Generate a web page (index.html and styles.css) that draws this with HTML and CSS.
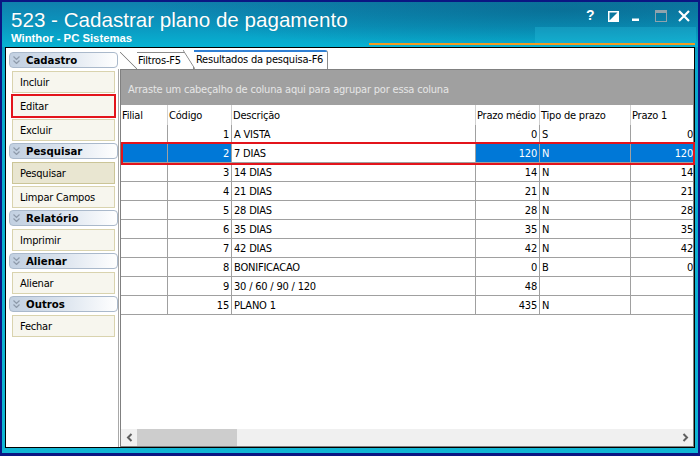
FILE: index.html
```html
<!DOCTYPE html>
<html>
<head>
  <title>523 - Cadastrar plano de pagamento</title>
  <link rel="stylesheet" href="styles.css">
</head>
<body>
  <div class="window">
    <div class="titlebar">
      <div class="title-text">
        <div class="title">523 - Cadastrar plano de pagamento</div>
        <div class="subtitle">Winthor - PC Sistemas</div>
      </div>
      <div class="controls">
        <span class="ctl-help">?</span>
        <svg class="ctl-contrast" width="11" height="11" viewBox="0 0 11 11">
          <rect x="0.75" y="0.75" width="9.5" height="9.5" fill="none" stroke="#fff" stroke-width="1.5"/>
          <polygon points="10,1 10,10 1,10" fill="#fff"/>
        </svg>
        <svg class="ctl-min" width="7" height="11" viewBox="0 0 7 11">
          <rect x="0" y="8.5" width="7" height="2.5" fill="#fff"/>
        </svg>
        <svg class="ctl-max" width="12" height="12" viewBox="0 0 12 12">
          <rect x="0.5" y="0.5" width="11" height="11" fill="none" stroke="#8fa3ad" stroke-width="1"/>
          <rect x="0.5" y="0.5" width="11" height="2.5" fill="#8fa3ad"/>
        </svg>
        <svg class="ctl-close" width="12" height="12" viewBox="0 0 12 12">
          <path d="M1 1 L11 11 M11 1 L1 11" stroke="#fff" stroke-width="2.2" fill="none"/>
        </svg>
      </div>
    </div>

    <div class="content">
      <!-- Menu lateral -->
      <div class="sidebar">
        <div class="group-header"><svg width="7" height="8" viewBox="0 0 7 8"><path d="M0.5 0.5 L3.5 3.5 L6.5 0.5 M0.5 4.5 L3.5 7.5 L6.5 4.5" fill="none" stroke="#8e9aaa" stroke-width="1.2"/></svg>Cadastro</div>
        <div class="side-btn">Incluir</div>
        <div class="side-btn marked">Editar</div>
        <div class="side-btn">Excluir</div>

        <div class="group-header"><svg width="7" height="8" viewBox="0 0 7 8"><path d="M0.5 0.5 L3.5 3.5 L6.5 0.5 M0.5 4.5 L3.5 7.5 L6.5 4.5" fill="none" stroke="#8e9aaa" stroke-width="1.2"/></svg>Pesquisar</div>
        <div class="side-btn active">Pesquisar</div>
        <div class="side-btn">Limpar Campos</div>

        <div class="group-header"><svg width="7" height="8" viewBox="0 0 7 8"><path d="M0.5 0.5 L3.5 3.5 L6.5 0.5 M0.5 4.5 L3.5 7.5 L6.5 4.5" fill="none" stroke="#8e9aaa" stroke-width="1.2"/></svg>Relatório</div>
        <div class="side-btn">Imprimir</div>

        <div class="group-header"><svg width="7" height="8" viewBox="0 0 7 8"><path d="M0.5 0.5 L3.5 3.5 L6.5 0.5 M0.5 4.5 L3.5 7.5 L6.5 4.5" fill="none" stroke="#8e9aaa" stroke-width="1.2"/></svg>Alienar</div>
        <div class="side-btn">Alienar</div>

        <div class="group-header"><svg width="7" height="8" viewBox="0 0 7 8"><path d="M0.5 0.5 L3.5 3.5 L6.5 0.5 M0.5 4.5 L3.5 7.5 L6.5 4.5" fill="none" stroke="#8e9aaa" stroke-width="1.2"/></svg>Outros</div>
        <div class="side-btn">Fechar</div>
      </div>

      <!-- Zone principale -->
      <div class="main">
        <div class="tabs">
          <div class="tab">Filtros-F5</div>
          <div class="tab tab-active">Resultados da pesquisa-F6</div>
        </div>
        <div class="tab-body">
          <div class="grid">
            <div class="group-panel">Arraste um cabeçalho de coluna aqui para agrupar por essa coluna</div>
            <div class="table-wrap">
              <table>
                <colgroup>
                  <col style="width:47px">
                  <col style="width:64px">
                  <col style="width:244px">
                  <col style="width:64px">
                  <col style="width:91px">
                  <col style="width:62px">
                </colgroup>
                <thead>
                  <tr>
                    <th>Filial</th>
                    <th>Código</th>
                    <th>Descrição</th>
                    <th>Prazo médio</th>
                    <th>Tipo de prazo</th>
                    <th>Prazo 1</th>
                  </tr>
                </thead>
                <tbody>
                  <tr><td></td><td class="num">1</td><td>A VISTA</td><td class="num">0</td><td>S</td><td class="num">0</td></tr>
                  <tr class="selected"><td></td><td class="num">2</td><td class="focus">7 DIAS</td><td class="num">120</td><td>N</td><td class="num">120</td></tr>
                  <tr><td></td><td class="num">3</td><td>14 DIAS</td><td class="num">14</td><td>N</td><td class="num">14</td></tr>
                  <tr><td></td><td class="num">4</td><td>21 DIAS</td><td class="num">21</td><td>N</td><td class="num">21</td></tr>
                  <tr><td></td><td class="num">5</td><td>28 DIAS</td><td class="num">28</td><td>N</td><td class="num">28</td></tr>
                  <tr><td></td><td class="num">6</td><td>35 DIAS</td><td class="num">35</td><td>N</td><td class="num">35</td></tr>
                  <tr><td></td><td class="num">7</td><td>42 DIAS</td><td class="num">42</td><td>N</td><td class="num">42</td></tr>
                  <tr><td></td><td class="num">8</td><td>BONIFICACAO</td><td class="num">0</td><td>B</td><td class="num">0</td></tr>
                  <tr><td></td><td class="num">9</td><td>30 / 60 / 90 / 120</td><td class="num">48</td><td></td><td class="num"></td></tr>
                  <tr><td></td><td class="num">15</td><td>PLANO 1</td><td class="num">435</td><td>N</td><td class="num"></td></tr>
                </tbody>
              </table>
              <div class="row-mark"></div>
            </div>
            <div class="filler"></div>
            <div class="hscroll">
              <div class="sb-arrow"><svg width="7" height="9" viewBox="0 0 7 9"><path d="M5.5 1 L2 4.5 L5.5 8" stroke="#606060" stroke-width="2" fill="none"/></svg></div>
              <div class="sb-thumb"></div>
              <div class="sb-track"></div>
              <div class="sb-arrow"><svg width="7" height="9" viewBox="0 0 7 9"><path d="M1.5 1 L5 4.5 L1.5 8" stroke="#606060" stroke-width="2" fill="none"/></svg></div>
            </div>
          </div>
        </div>
      </div>
    </div>
  </div>
</body>
</html>
```

FILE: styles.css
```css
* {
  box-sizing: border-box;
}
html, body {
  margin: 0;
  padding: 0;
}
body {
  width: 700px;
  height: 456px;
  overflow: hidden;
  font-family: "DejaVu Sans Condensed", "Liberation Sans", sans-serif;
  font-size: 11px;
  letter-spacing: -0.2px;
  color: #000;
  background-color: #0b1683;
}

/* Fenêtre */
.window {
  width: 700px;
  height: 456px;
  border: 2px solid #0b1683;
  border-bottom-width: 3px;
  padding: 0 3px 5px 3px;
  background: linear-gradient(to bottom, #0c86b0 0%, #0aa9cc 15%, #10b6d4 100%);
  display: flex;
  flex-direction: column;
}
.titlebar {
  position: relative;
  height: 45px;
  margin: 0 -3px;
  padding: 6px 8px 0 9px;
  display: flex;
  background:
    radial-gradient(ellipse 420px 40px at 560px 8px, rgba(4, 90, 125, 0.5), rgba(4, 90, 125, 0) 100%),
    linear-gradient(to bottom, #1080ad 0%, #0b98c0 55%, #07b3d3 100%);
}
.titlebar::before {
  content: "";
  position: absolute;
  left: 533px;
  right: 2px;
  top: 25px;
  height: 16px;
  background-color: rgba(40, 190, 220, 0.35);
}
.titlebar::after {
  content: "";
  position: absolute;
  left: 367px;
  right: 3px;
  top: 41px;
  height: 2px;
  background-color: #f29a1f;
}
.title-text {
  color: #fff;
  font-family: "Liberation Sans", Arial, sans-serif;
  letter-spacing: 0;
}
.title {
  font-size: 20.6px;
  line-height: 24px;
  text-shadow: 0 0 1px rgba(0, 0, 0, 0.2);
}
.subtitle {
  font-size: 11.3px;
  font-weight: bold;
  line-height: 13px;
}
.controls {
  margin-left: auto;
  display: flex;
  align-items: flex-start;
  padding-top: 1px;
}
.ctl-help {
  color: #fff;
  font-family: "Liberation Sans", Arial, sans-serif;
  font-weight: bold;
  font-size: 14px;
  line-height: 13px;
  width: 9px;
}
.ctl-contrast {
  margin-left: 13px;
  margin-top: 2px;
}
.ctl-min {
  margin-left: 13px;
  margin-top: 1px;
}
.ctl-max {
  margin-left: 16px;
  margin-top: 1px;
}
.ctl-close {
  margin-left: 11px;
  margin-top: 1px;
}

/* Contenu */
.content {
  height: 401px;
  border: 1px solid #000;
  background-color: #fff;
  display: flex;
}
.sidebar {
  width: 112px;
  padding: 4px 0 0 3px;
}
.group-header {
  width: 109px;
  height: 16px;
  margin-bottom: 3px;
  padding-left: 3px;
  border: 1px solid #aab9cb;
  border-radius: 4px;
  background: linear-gradient(to right, #c2d0e1 0%, #d9e2ed 45%, #ffffff 100%);
  display: flex;
  align-items: center;
  gap: 6px;
  font-weight: bold;
  font-size: 11.3px;
  letter-spacing: 0;
}
.side-btn {
  width: 103px;
  height: 22px;
  margin: 0 3px 2px 3px;
  padding-left: 7px;
  border: 1px solid #d9d3ae;
  background-color: #f7f6ee;
  display: flex;
  align-items: center;
}
.side-btn.active {
  background-color: #e9e6d1;
  border-color: #cbc597;
}
.side-btn.marked {
  outline: 2px solid #e3141b;
  outline-offset: -1px;
}

.main {
  flex: 1;
  display: flex;
  flex-direction: column;
}
.tabs {
  height: 21px;
  padding-left: 2px;
  display: flex;
  align-items: flex-end;
}
.tab {
  position: relative;
  height: 17px;
  padding: 0 12px 0 18px;
  border-right: 1px solid #8c8c8c;
  display: flex;
  align-items: center;
  background: transparent;
}
.tab::before {
  content: "";
  position: absolute;
  left: 0;
  top: 0;
  width: 17px;
  height: 100%;
  background: linear-gradient(to top right, transparent calc(50% - 0.8px), #8c8c8c 50%, #fff calc(50% + 0.8px));
}
.tab::after {
  content: "";
  position: absolute;
  left: 17px;
  right: 0;
  top: 0;
  height: 1px;
  background-color: #8c8c8c;
}
.tab-active {
  z-index: 1;
  height: 19px;
  margin-left: -11px;
  padding: 0 4px 0 13px;
  border-top-right-radius: 3px;
  background: linear-gradient(to right, transparent 12px, #fff 12px);
}
.tab-active::before {
  width: 12px;
}
.tab-active::after {
  left: 11px;
  height: 2px;
  border-top-right-radius: 3px;
  background-color: #2f7fd3;
}
.tab-body {
  flex: 1;
  border-left: 1px solid #a8a8a8;
  padding-left: 1px;
  display: flex;
}
.grid {
  flex: 1;
  border: 1px solid #808080;
  display: flex;
  flex-direction: column;
}
.group-panel {
  height: 35px;
  padding: 3px 0 0 7px;
  background-color: #a0a0a0;
  color: #e6e6e6;
  display: flex;
  align-items: center;
}
.table-wrap {
  position: relative;
}
table {
  width: 572px;
  table-layout: fixed;
  border-collapse: separate;
  border-spacing: 0;
  font-size: 11px;
}
th {
  height: 20px;
  padding: 0 2px 0 1px;
  font-weight: normal;
  text-align: left;
  white-space: nowrap;
  border-right: 1px solid #d0d0d0;
}
td {
  height: 19px;
  padding: 0 2px;
  white-space: nowrap;
  overflow: hidden;
  border-right: 1px solid #a0a0a0;
  border-bottom: 1px solid #a0a0a0;
}
th:last-child, td:last-child {
  border-right: none;
  padding-right: 0;
}
td.num {
  text-align: right;
}
tr.selected td {
  background-color: #0078d7;
  color: #fff;
}
tr.selected td.focus {
  background-color: #fff;
  color: #000;
}
.row-mark {
  position: absolute;
  left: 0;
  top: 37px;
  width: 574px;
  height: 23px;
  border: 2px solid #e3141b;
}
.filler {
  flex: 1;
}
.hscroll {
  height: 17px;
  background-color: #f0f0f0;
  display: flex;
}
.sb-arrow {
  width: 16px;
  display: flex;
  align-items: center;
  justify-content: center;
}
.sb-thumb {
  width: 100px;
  background-color: #cdcdcd;
}
.sb-track {
  flex: 1;
}
```
